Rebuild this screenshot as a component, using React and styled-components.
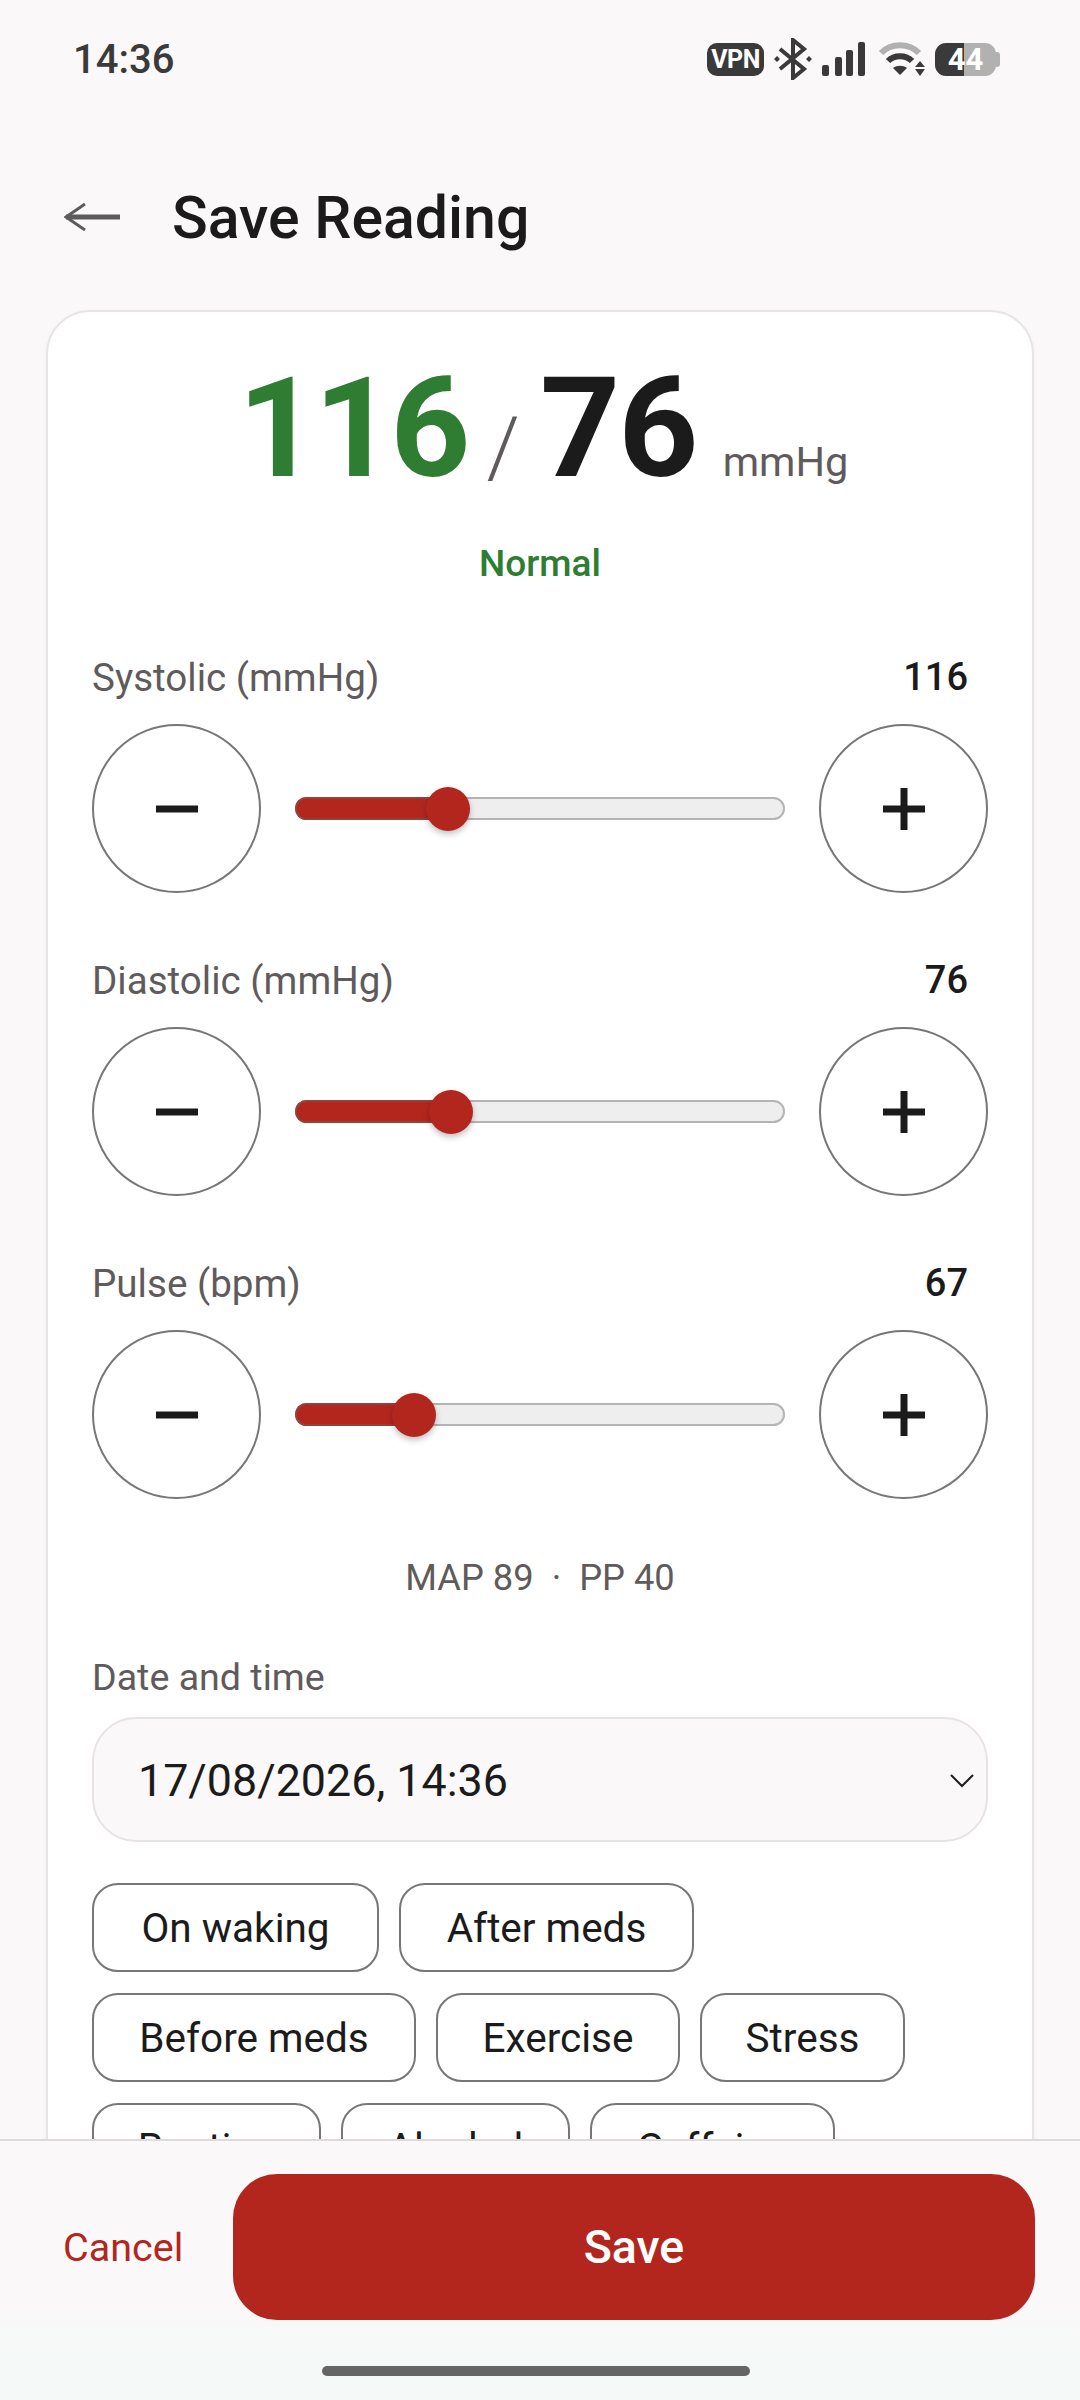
import React from 'react';
import styled, { createGlobalStyle } from 'styled-components';

const GlobalStyle = createGlobalStyle`
  html, body {
    margin: 0;
    padding: 0;
    background: #faf8f9;
  }
  * {
    box-sizing: border-box;
  }
`;

const Page = styled.div`
  width: 1080px;
  height: 2400px;
  display: flex;
  flex-direction: column;
  overflow: hidden;
  background: #faf8f9;
  font-family: Roboto, "Noto Sans", sans-serif;
  color: #1c1b1c;
`;

const StatusBar = styled.div`
  height: 116px;
  flex: none;
  display: flex;
  align-items: center;
  justify-content: space-between;
  padding: 2px 80px 0 73px;
`;

const Clock = styled.span`
  font-size: 40px;
  font-weight: 500;
  color: #3b3a3b;
`;

const StatusIcons = styled.div`
  display: flex;
  align-items: center;
  gap: 10px;
`;

const VpnPill = styled.span`
  width: 57px;
  height: 33px;
  border-radius: 10px;
  background: #3b3a3b;
  color: #fff;
  font-size: 25px;
  font-weight: 700;
  letter-spacing: -0.5px;
  display: flex;
  align-items: center;
  justify-content: center;
`;

const Battery = styled.span`
  position: relative;
  width: 61px;
  height: 33px;
  margin-right: 4px;
  border-radius: 11px;
  background: linear-gradient(90deg, #3b3a3b 0 47%, #b2b1b2 47% 100%);
  color: #fff;
  font-size: 31px;
  font-weight: 700;
  display: flex;
  align-items: center;
  justify-content: center;

  &::after {
    content: '';
    position: absolute;
    right: -4px;
    top: 9px;
    width: 4px;
    height: 15px;
    border-radius: 0 3px 3px 0;
    background: #b2b1b2;
  }
`;

const Header = styled.header`
  height: 122px;
  margin-top: 40px;
  flex: none;
  display: flex;
  align-items: center;
  gap: 52px;
  padding: 0 0 0 64px;
`;

const Title = styled.h1`
  margin: 0;
  font-size: 59px;
  font-weight: 500;
  color: #1c1b1c;
`;

const Scroller = styled.main`
  flex: 1;
  min-height: 0;
  overflow: hidden;
  padding: 32px 46px 0;
`;

const Card = styled.section`
  background: #fff;
  border: 2px solid #e8e4e6;
  border-radius: 44px;
  padding: 34px 44px 40px;
  box-shadow: 0 2px 6px rgba(0, 0, 0, 0.04);
`;

const Hero = styled.div`
  display: flex;
  align-items: baseline;
  justify-content: center;
  height: 164px;
  padding-left: 6px;
`;

const HeroValue = styled.span`
  font-size: 140px;
  line-height: 164px;
  font-weight: 700;
  letter-spacing: ${(p) => p.$tight}px;
  color: ${(p) => p.$color};
`;

const Slash = styled.span`
  font-size: 84px;
  font-weight: 300;
  color: #5f5b5d;
  margin: 0 20px 0 20px;
`;

const Unit = styled.span`
  font-size: 41.5px;
  color: #5f5b5d;
  margin-left: 26px;
`;

const Category = styled.div`
  margin-top: 32px;
  text-align: center;
  font-size: 37px;
  font-weight: 500;
  color: #2e7d32;
`;

const Metric = styled.div`
  margin-top: ${(p) => p.$top}px;
`;

const MetricHead = styled.div`
  display: flex;
  justify-content: space-between;
  align-items: center;
  height: 44px;
  padding-right: 20px;
  margin-bottom: 25px;
`;

const MetricLabel = styled.span`
  font-size: 38.6px;
  color: #5f5b5d;
`;

const MetricValue = styled.span`
  font-size: 38px;
  font-weight: 500;
  color: #1c1b1c;
`;

const Stepper = styled.div`
  display: flex;
  align-items: center;
  gap: 34px;
`;

const RoundButton = styled.button`
  width: 169px;
  height: 169px;
  flex: none;
  padding: 0;
  border: 2px solid #79767a;
  border-radius: 50%;
  background: #fff;
  display: flex;
  align-items: center;
  justify-content: center;
  color: #1c1b1c;
`;

const Track = styled.div`
  position: relative;
  flex: 1;
  height: 23px;
  border-radius: 12px;
  background: #eeeeee;
  border: 2px solid #b5b3b4;
`;

const TrackFill = styled.div`
  position: absolute;
  left: -2px;
  top: -2px;
  bottom: -2px;
  border-radius: 12px;
  background: #b3261e;
  border: 2px solid #95403b;
  border-right: none;
`;

const Thumb = styled.div`
  position: absolute;
  top: 50%;
  width: 44px;
  height: 44px;
  margin: -22px 0 0 -22px;
  border-radius: 50%;
  background: #b3261e;
  box-shadow: 0 3px 6px rgba(0, 0, 0, 0.25);
`;

const Derived = styled.div`
  margin-top: 57px;
  text-align: center;
  font-size: 36.3px;
  color: #5f5b5d;
`;

const FieldLabel = styled.div`
  margin-top: 56px;
  font-size: 37.6px;
  color: #5f5b5d;
`;

const DateField = styled.div`
  margin-top: 18px;
  height: 125px;
  border: 2px solid #e8e2e4;
  border-radius: 44px;
  background: #faf8f9;
  display: flex;
  align-items: center;
  justify-content: space-between;
  padding: 2px 12px 0 44px;
  font-size: 44.8px;
  color: #1c1b1c;
`;

const Chips = styled.div`
  display: flex;
  flex-wrap: wrap;
  gap: 21px 20px;
  margin-top: 41px;
`;

const Chip = styled.span`
  width: ${(p) => p.$width}px;
  height: 89px;
  border: 2px solid #79767a;
  border-radius: 26px;
  display: flex;
  align-items: center;
  justify-content: center;
  font-size: 40.5px;
  color: #1c1b1c;
`;

const Footer = styled.footer`
  flex: none;
  height: 261px;
  border-top: 2px solid #dedbdc;
  background: linear-gradient(180deg, #faf8f9 0 65%, #f5f9f8 85%);
  display: flex;
  flex-direction: column;
  padding-top: 33px;
`;

const Actions = styled.div`
  display: flex;
  align-items: center;
  padding: 0 45px 0 63px;
`;

const CancelButton = styled.button`
  width: 170px;
  padding: 0;
  border: none;
  background: none;
  text-align: left;
  font: 400 39.5px Roboto, sans-serif;
  color: #b3261e;
`;

const SaveButton = styled.button`
  flex: 1;
  height: 146px;
  border: none;
  border-radius: 44px;
  background: #b3261e;
  color: #fff;
  font: 500 46.5px Roboto, sans-serif;
`;

const HomeBar = styled.div`
  width: 428px;
  height: 10px;
  margin: 46px 0 0 322px;
  border-radius: 5px;
  background: #666566;
`;

const metrics = [
  { label: 'Systolic (mmHg)', value: 116, percent: 31, top: 70 },
  { label: 'Diastolic (mmHg)', value: 76, percent: 31.6, top: 65 },
  { label: 'Pulse (bpm)', value: 67, percent: 24, top: 65 },
];

const chips = [
  { label: 'On waking', width: 287 },
  { label: 'After meds', width: 295 },
  { label: 'Before meds', width: 324 },
  { label: 'Exercise', width: 244 },
  { label: 'Stress', width: 205 },
  { label: 'Routine', width: 229 },
  { label: 'Alcohol', width: 229 },
  { label: 'Caffeine', width: 245 },
];

const Minus = () => (
  <svg width="42" height="42" viewBox="0 0 42 42">
    <rect x="0" y="17.5" width="42" height="7" fill="currentColor" />
  </svg>
);

const Plus = () => (
  <svg width="42" height="42" viewBox="0 0 42 42">
    <path d="M0 17.5h42v7H0zM17.5 0h7v42h-7z" fill="currentColor" />
  </svg>
);

const StatusGlyphs = () => (
  <StatusIcons>
    <VpnPill>VPN</VpnPill>
    {/* bluetooth */}
    <svg width="38" height="42" viewBox="0 0 38 42" fill="none" stroke="#3b3a3b" strokeWidth="4">
      <path d="M6 11l24 20-11 9V2l11 9L6 31" />
      <path d="M0 21l3-3 3 3-3 3zM32 21l3-3 3 3-3 3z" fill="#3b3a3b" stroke="none" />
    </svg>
    {/* signal */}
    <svg width="46" height="34" viewBox="0 0 46 34" fill="#3b3a3b">
      <rect x="0" y="23" width="7" height="11" rx="2" />
      <rect x="13" y="15" width="7" height="19" rx="2" />
      <rect x="24" y="8" width="7" height="26" rx="2" />
      <rect x="36" y="0" width="7" height="34" rx="2" />
    </svg>
    {/* wifi */}
    <svg width="47" height="36" viewBox="0 0 47 36" fill="none">
      <path d="M3 12C13 1.5 31 1.5 41 12" stroke="#b2b1b2" strokeWidth="6" />
      <path d="M10 20C16 13.5 28 13.5 34 20" stroke="#3b3a3b" strokeWidth="6" />
      <path d="M15 27C19 24 25 24 29 27L22 34z" fill="#3b3a3b" />
      <path d="M42 20l5 6H37zM37 28h10l-5 7z" fill="#3b3a3b" />
    </svg>
    <Battery>44</Battery>
  </StatusIcons>
);

const App = () => (
  <Page>
    <GlobalStyle />
    <StatusBar>
      <Clock>14:36</Clock>
      <StatusGlyphs />
    </StatusBar>
    <Header>
      <svg width="56" height="28" viewBox="0 0 56 28" fill="none" stroke="#5f5b5d">
        <path d="M2 14h54" strokeWidth="5" />
        <path d="M21 1L2 14l19 13" strokeWidth="3" />
      </svg>
      <Title>Save Reading</Title>
    </Header>
    <Scroller>
      <Card>
        <Hero>
          <HeroValue $color="#2e7d32" $tight={-4}>116</HeroValue>
          <Slash>/</Slash>
          <HeroValue $color="#1c1b1c" $tight={-2}>76</HeroValue>
          <Unit>mmHg</Unit>
        </Hero>
        <Category>Normal</Category>
        {metrics.map((m) => (
          <Metric key={m.label} $top={m.top}>
            <MetricHead>
              <MetricLabel>{m.label}</MetricLabel>
              <MetricValue>{m.value}</MetricValue>
            </MetricHead>
            <Stepper>
              <RoundButton><Minus /></RoundButton>
              <Track>
                <TrackFill style={{ width: `${m.percent}%` }} />
                <Thumb style={{ left: `${m.percent}%` }} />
              </Track>
              <RoundButton><Plus /></RoundButton>
            </Stepper>
          </Metric>
        ))}
        <Derived>MAP 89 &nbsp;·&nbsp; PP 40</Derived>
        <FieldLabel>Date and time</FieldLabel>
        <DateField>
          17/08/2026, 14:36
          <svg width="24" height="14" viewBox="0 0 24 14" fill="none" stroke="#1c1b1c" strokeWidth="2">
            <path d="M1 1l11 11L23 1" />
          </svg>
        </DateField>
        <Chips>
          {chips.map((c) => <Chip key={c.label} $width={c.width}>{c.label}</Chip>)}
        </Chips>
      </Card>
    </Scroller>
    <Footer>
      <Actions>
        <CancelButton>Cancel</CancelButton>
        <SaveButton>Save</SaveButton>
      </Actions>
      <HomeBar />
    </Footer>
  </Page>
);

export default App;
